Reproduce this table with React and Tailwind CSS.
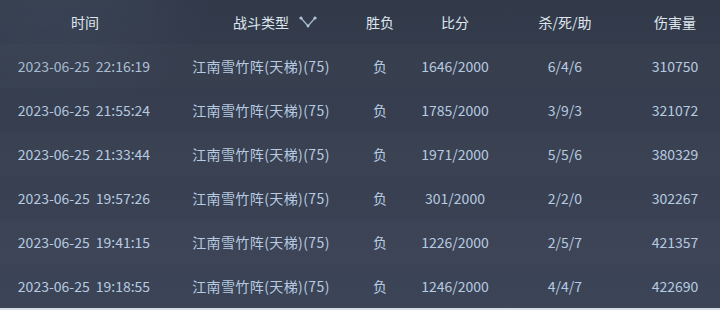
import React from 'react';

const rows = [
    { time: '2023-06-25 22:16:19', score: '1646/2000', kda: '6/4/6', dmg: '310750' },
    { time: '2023-06-25 21:55:24', score: '1785/2000', kda: '3/9/3', dmg: '321072' },
    { time: '2023-06-25 21:33:44', score: '1971/2000', kda: '5/5/6', dmg: '380329' },
    { time: '2023-06-25 19:57:26', score: '301/2000', kda: '2/2/0', dmg: '302267' },
    { time: '2023-06-25 19:41:15', score: '1226/2000', kda: '2/5/7', dmg: '421357' },
    { time: '2023-06-25 19:18:55', score: '1246/2000', kda: '4/4/7', dmg: '422690' },
];

const cols = 'grid grid-cols-[170px_180px_60px_90px_130px_90px]';

const SortIcon = () => (
    <svg width="18" height="12" viewBox="0 0 18 12" fill="none">
        <path d="M2 2 L9 10 L16 2" stroke="#9db2c7" strokeWidth="1.4" strokeLinejoin="round" />
        <circle cx="2" cy="2" r="1.6" fill="#b3c6d9" />
        <circle cx="16" cy="2" r="1.6" fill="#b3c6d9" />
        <circle cx="9" cy="10" r="1.4" fill="#b3c6d9" />
    </svg>
);

const App = () => {
    return (
        <div
            className="w-[720px] h-[310px] overflow-hidden bg-gradient-to-b from-[#323a4a] to-[#3c4457] text-[14px]"
            style={{ fontFamily: '"Noto Sans CJK SC", "Noto Sans", sans-serif' }}
        >
            <div className="relative">
                <div className="absolute -left-[60px] -top-[90px] w-[220px] h-[160px] rounded-full bg-[#4a5668] opacity-30 blur-2xl" />
                <div className={`${cols} h-[44px] items-center text-[#dfe6ee] relative`}>
                    <div className="text-center">时间</div>
                    <div className="flex items-center gap-[10px] pl-[63px]">
                        <span>战斗类型</span>
                        <SortIcon />
                    </div>
                    <div className="text-center">胜负</div>
                    <div className="text-center">比分</div>
                    <div className="text-center">杀/死/助</div>
                    <div className="text-center">伤害量</div>
                </div>
            </div>
            {rows.map((r, i) => {
                const [date, clock] = r.time.split(' ');
                return (
                    <div
                        key={i}
                        className={`${cols} h-[44px] items-center text-[#b7cbe0] ${i % 2 === 0 ? 'bg-[#ffffff04]' : ''}`}
                    >
                        <div className="flex justify-center gap-[6px] pr-[2px]">
                            <span>{date}</span>
                            <span>{clock}</span>
                        </div>
                        <div className="text-center tracking-[0.4px] pl-[2px]">江南雪竹阵(天梯)(75)</div>
                        <div className="text-center">负</div>
                        <div className="text-center">{r.score}</div>
                        <div className="text-center">{r.kda}</div>
                        <div className="text-center">{r.dmg}</div>
                    </div>
                );
            })}
            <div className="h-[2px] bg-[#d9dee5]" />
        </div>
    );
};

export default App;
